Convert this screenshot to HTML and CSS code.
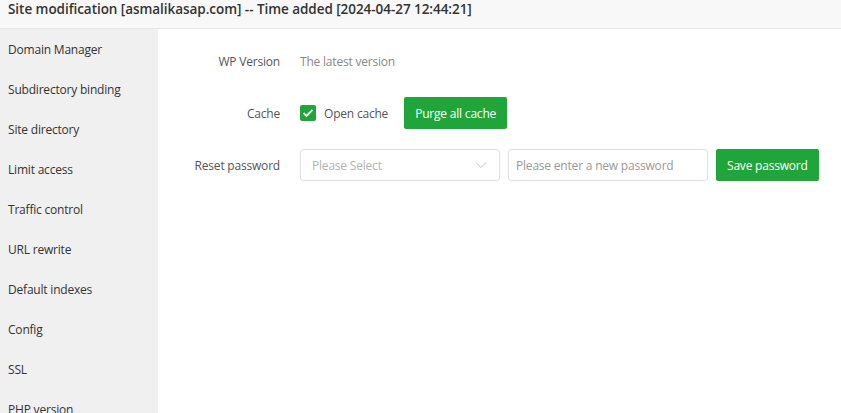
FILE: index.html
```html
<!DOCTYPE html>
<html>
<head>
<meta charset="utf-8">
<link rel="stylesheet" href="styles.css">
</head>
<body>
<div class="window">
  <div class="title">Site modification [asmalikasap.com] -- Time added [2024-04-27 12:44:21]</div>
  <div class="main">
    <ul class="side">
      <li>Domain Manager</li>
      <li>Subdirectory binding</li>
      <li>Site directory</li>
      <li>Limit access</li>
      <li>Traffic control</li>
      <li>URL rewrite</li>
      <li>Default indexes</li>
      <li>Config</li>
      <li>SSL</li>
      <li>PHP version</li>
    </ul>
    <div class="content">
      <div class="row">
        <span class="label">WP Version</span>
        <span class="value">The latest version</span>
      </div>
      <div class="row">
        <span class="label">Cache</span>
        <label class="check">
          <span class="box"><svg width="12" height="10" viewBox="0 0 12 10"><path d="M1.5 5 L4.5 8 L10.5 1.8" fill="none" stroke="#fff" stroke-width="1.8"/></svg></span>
          Open cache
        </label>
        <button class="btn">Purge all cache</button>
      </div>
      <div class="row">
        <span class="label">Reset password</span>
        <div class="select">
          <span>Please Select</span>
          <svg width="12" height="8" viewBox="0 0 12 8"><path d="M1 1.5 L6 6.5 L11 1.5" fill="none" stroke="#c0c4cc" stroke-width="1"/></svg>
        </div>
        <input class="input" placeholder="Please enter a new password">
        <button class="btn">Save password</button>
      </div>
    </div>
  </div>
</div>
</body>
</html>
```
FILE: styles.css
```css
html, body {
  margin: 0;
  padding: 0;
  background: #fff;
  font-family: "Open Sans", "Noto Sans", sans-serif;
  overflow: hidden;
}
.window {
  width: 841px;
  height: 413px;
  display: flex;
  flex-direction: column;
  overflow: hidden;
}
.title {
  flex: none;
  height: 29px;
  box-sizing: border-box;
  background: #f8f8f8;
  border-bottom: 1px solid #e6e6e6;
  padding: 0 8px;
  font-size: 13.5px;
  font-weight: 600;
  color: #333;
  line-height: 18px;
  letter-spacing: -0.05px;
}
.main {
  flex: 1;
  display: flex;
  min-height: 0;
  overflow: hidden;
}
.side {
  list-style: none;
  margin: 0;
  padding: 1px 0 0;
  width: 158px;
  flex: none;
  background: #f0f0f0;
  font-size: 12px;
  color: #333;
  letter-spacing: -0.2px;
}
.side li {
  height: 40px;
  line-height: 40px;
  padding-left: 8px;
}
.content {
  flex: 1;
  padding: 16px 0 0 22px;
  font-size: 12px;
  color: #555;
  letter-spacing: -0.2px;
}
.row {
  display: flex;
  align-items: center;
  height: 32px;
  margin-bottom: 20px;
}
.label {
  width: 100px;
  text-align: right;
  margin-right: 20px;
  flex: none;
}
.value {
  color: #888;
}
.check {
  display: flex;
  align-items: center;
  color: #555;
  margin-right: 16px;
}
.box {
  width: 16px;
  height: 16px;
  background: #20a53a;
  border-radius: 2px;
  display: flex;
  align-items: center;
  justify-content: center;
  margin-right: 8px;
}
.btn {
  height: 32px;
  border: none;
  background: #20a53a;
  color: #fff;
  border-radius: 2px;
  font-family: inherit;
  font-size: 12px;
  letter-spacing: -0.2px;
  padding: 0 11px;
}
.select {
  width: 200px;
  height: 32px;
  box-sizing: border-box;
  border: 1px solid #dcdfe6;
  border-radius: 3px;
  display: flex;
  align-items: center;
  justify-content: space-between;
  padding: 0 12px 0 11px;
  color: #b3b3b3;
  margin-right: 8px;
}
.input {
  width: 200px;
  height: 32px;
  box-sizing: border-box;
  border: 1px solid #dcdfe6;
  border-radius: 3px;
  padding: 0 7px;
  font-family: inherit;
  font-size: 12px;
  letter-spacing: -0.2px;
  margin: 0 8px 0 0;
  outline: none;
}
.input::placeholder {
  color: #999;
}
```
